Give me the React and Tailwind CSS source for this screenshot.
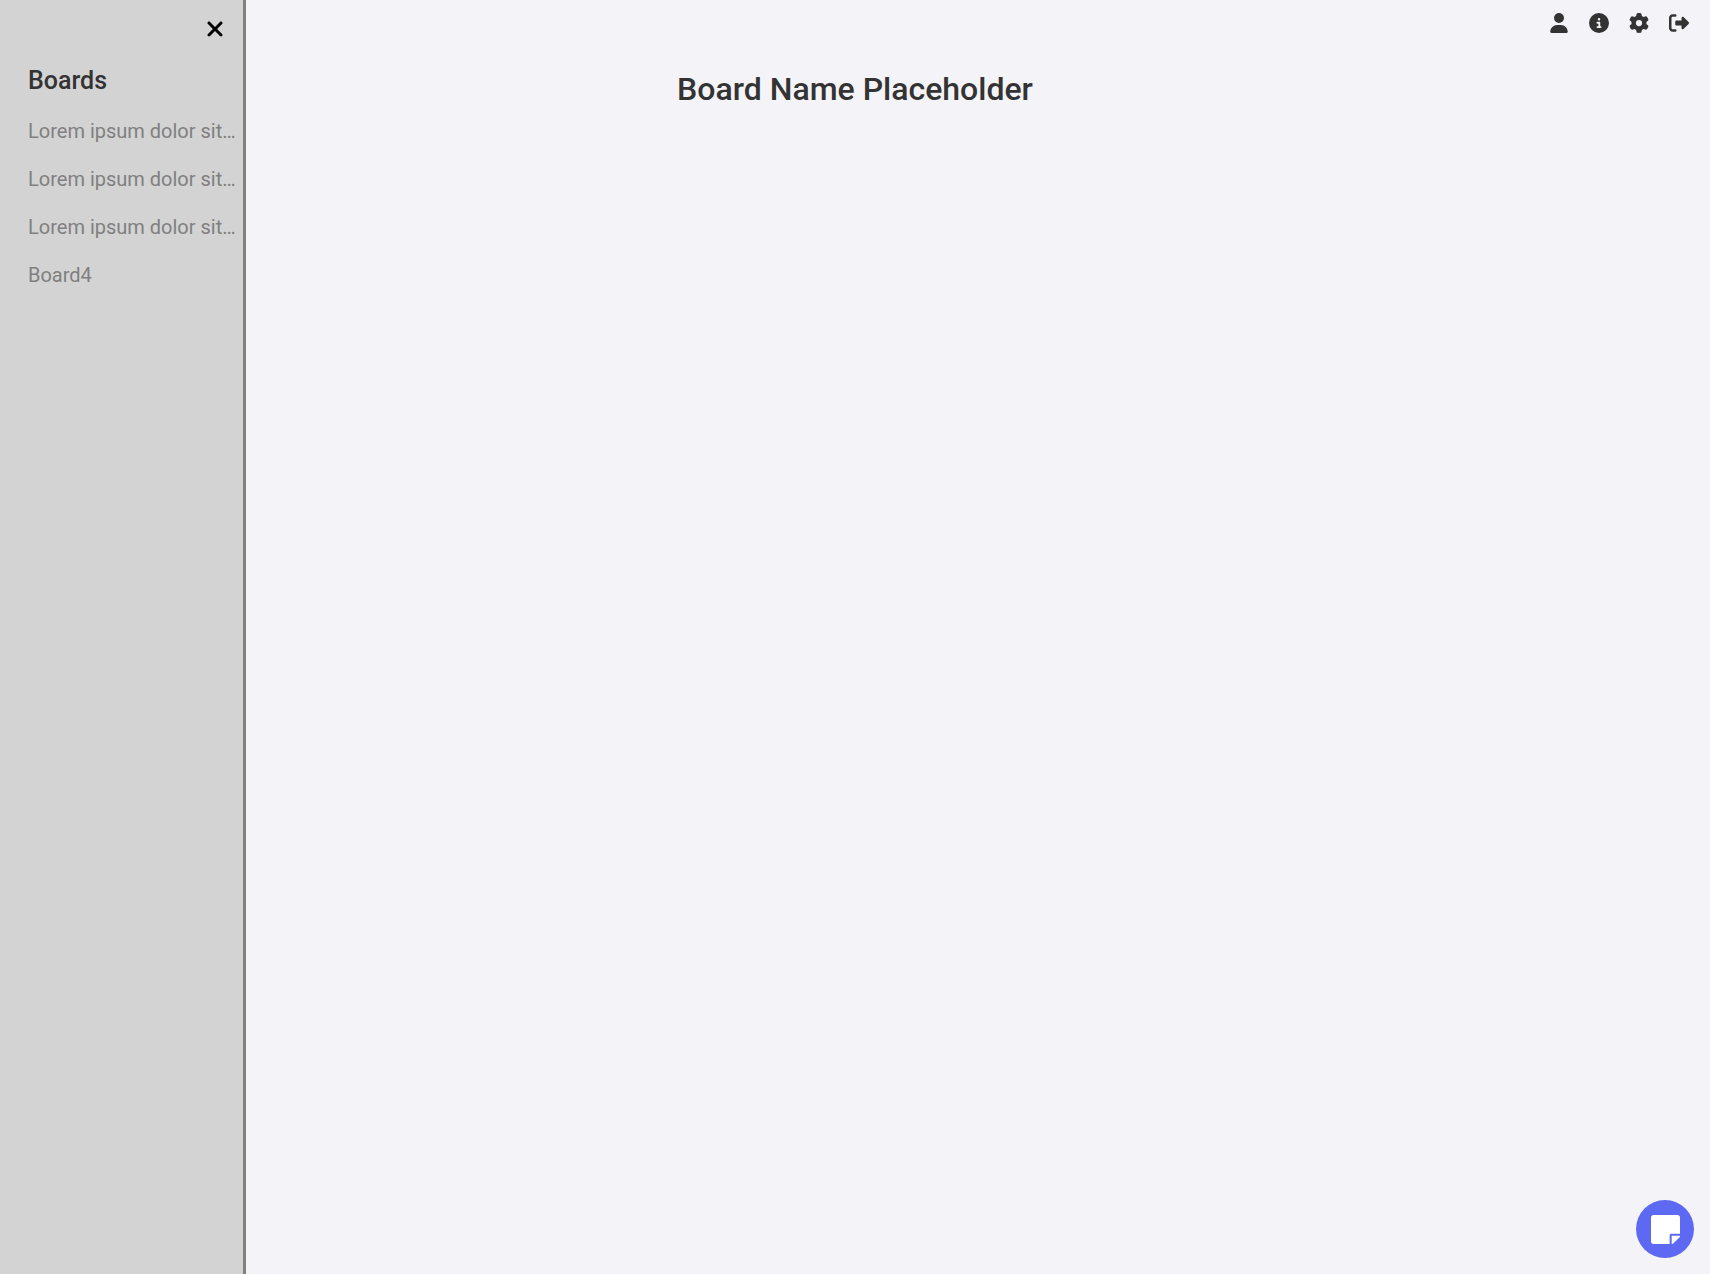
import { FaUser, FaCircleInfo, FaGear, FaRightFromBracket, FaXmark } from "react-icons/fa6";

const boards = [
  "Lorem ipsum dolor sit…",
  "Lorem ipsum dolor sit…",
  "Lorem ipsum dolor sit…",
  "Board4",
];

const actions = [
  { label: "Profile", Icon: FaUser },
  { label: "About", Icon: FaCircleInfo },
  { label: "Settings", Icon: FaGear },
  { label: "Log out", Icon: FaRightFromBracket },
];

function NoteIcon() {
  return (
    <svg viewBox="0 0 448 448" className="size-[29px]" fill="currentColor" aria-hidden="true">
      <path d="M312 288h136V38c0-21-17-38-38-38H38C17 0 0 17 0 38v372c0 21 17 38 38 38h250V312c0-13.200 10.800-24 24-24z" />
      <path d="M320 320h128v6c0 6-2 12-7 17l-98 98c-5 5-11 7-17 7h-6z" />
    </svg>
  );
}

function Sidebar() {
  return (
    <aside className="fixed inset-y-0 left-0 w-[246px] border-r-[3px] border-[#808080] bg-[#d3d3d3]">
      <div className="flex justify-end px-4 pt-[17px]">
        <button type="button" aria-label="Close sidebar" className="flex w-[25px] justify-center text-2xl text-black">
          <FaXmark />
        </button>
      </div>
      <nav aria-labelledby="boards-heading" className="pt-6 pr-1 pl-7">
        <h2 id="boards-heading" className="text-[25px] leading-8 font-medium">Boards</h2>
        <ul className="pt-2 text-xl text-[#808080]">
          {boards.map((name, i) => (
            <li key={i} className="h-12 pt-3">
              <a href="#" className="block truncate">{name}</a>
            </li>
          ))}
        </ul>
      </nav>
    </aside>
  );
}

export default function App() {
  return (
    <div className="min-h-screen bg-[#f4f3f8] font-['Roboto',sans-serif] text-[#333333]">
      <header className="flex justify-end gap-5 px-[21px] pt-[13px]">
        {actions.map(({ label, Icon }) => (
          <button key={label} type="button" aria-label={label} className="flex w-5 justify-center text-xl">
            <Icon />
          </button>
        ))}
      </header>
      <main>
        <h1 className="pt-9 text-center text-[32px] leading-10 font-medium">Board Name Placeholder</h1>
      </main>
      <Sidebar />
      <button
        type="button"
        aria-label="Add note"
        className="fixed right-4 bottom-4 flex size-[58px] items-center justify-center rounded-full bg-[#5d69f2] text-white"
      >
        <NoteIcon />
      </button>
    </div>
  );
}
